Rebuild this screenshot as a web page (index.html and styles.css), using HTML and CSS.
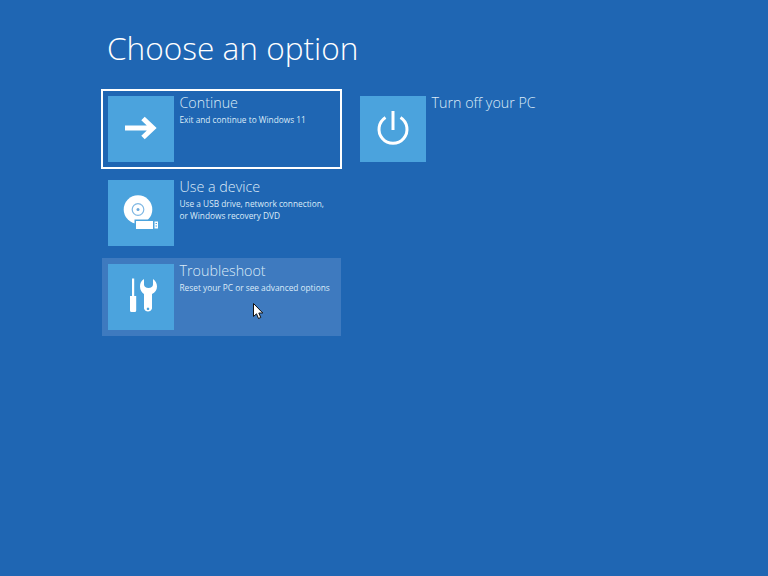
FILE: index.html
```html
<!DOCTYPE html>
<html lang="en">
<head>
  <meta charset="UTF-8">
  <meta name="viewport" content="width=device-width, initial-scale=1.0">
  <title>Choose an option</title>
  <link rel="stylesheet" href="styles.css">
</head>
<body>

<div class="screen">
  <h1>Choose an option</h1>

  <div class="options">
    <div class="column">
      <div class="option focused">
        <div class="tile">
          <svg viewBox="0 0 66 66" width="66" height="66">
            <path d="M17 32h28M35 22.500 45 32 35 41.500" fill="none" stroke="#fff" stroke-width="5"/>
          </svg>
        </div>
        <div class="text">
          <div class="name">Continue</div>
          <div class="desc">Exit and continue to Windows 11</div>
        </div>
      </div>

      <div class="option">
        <div class="tile">
          <svg viewBox="0 0 66 66" width="66" height="66">
            <circle cx="30" cy="29.500" r="14.300" fill="#fff"/>
            <circle cx="30" cy="29.500" r="5.800" fill="none" stroke="#7fb8e4" stroke-width="1.200"/>
            <circle cx="30" cy="29.500" r="1.500" fill="#6aa8da"/>
            <rect x="26.500" y="39.500" width="19.500" height="11" fill="#4ba3dd"/>
            <rect x="28" y="41" width="17" height="8" fill="#fff"/>
            <rect x="46.500" y="41.500" width="3.500" height="7" fill="#fff"/>
            <rect x="47.500" y="43" width="1.500" height="1" fill="#4ba3dd"/>
            <rect x="47.500" y="45.500" width="1.500" height="1" fill="#4ba3dd"/>
          </svg>
        </div>
        <div class="text">
          <div class="name">Use a device</div>
          <div class="desc">Use a USB drive, network connection,<br>or Windows recovery DVD</div>
        </div>
      </div>

      <div class="option hovered">
        <div class="tile">
          <svg viewBox="0 0 66 66" width="66" height="66">
            <path d="M24 14.500h2.200V32h2v14.500a1.500 1.500 0 0 1-1.500 1.500h-3.200a1.500 1.500 0 0 1-1.500-1.500V32h2z" fill="#fff"/>
            <path fill-rule="evenodd" fill="#fff" d="M36 15C33 16.500 32 19.500 32 22.500 32 26 33.800 28.800 36 30V44.500a4.200 4.200 0 0 0 8 0V30C47 28.800 49 26 49 22.500 49 19.500 47.500 16.500 45 15V20.500C45 22.500 43 24 40.500 24 38 24 36 22.500 36 20.500ZM40 43.500a1.300 1.300 0 1 0 .01 0Z"/>
          </svg>
        </div>
        <div class="text">
          <div class="name">Troubleshoot</div>
          <div class="desc">Reset your PC or see advanced options</div>
        </div>
        <svg class="cursor" viewBox="0 0 12 17" width="12" height="17">
          <path d="M.5.5V13.500L3.500 10.800 5.500 15.500 7.800 14.500 5.800 10H9.800Z" fill="#fff" stroke="#111" stroke-width="1"/>
        </svg>
      </div>
    </div>

    <div class="column">
      <div class="option">
        <div class="tile">
          <svg viewBox="0 0 66 66" width="66" height="66">
            <path d="M25.500 21.500A14 14 0 1 0 40.500 21.500" fill="none" stroke="#fff" stroke-width="3"/>
            <path d="M33 15V34" stroke="#fff" stroke-width="3"/>
          </svg>
        </div>
        <div class="text">
          <div class="name">Turn off your PC</div>
        </div>
      </div>
    </div>
  </div>
</div>

</body>
</html>
```

FILE: styles.css
```css
body {
  margin: 0;
  background-color: #1f66b3;
  color: white;
  font-family: "Open Sans", "Noto Sans", sans-serif;
}

.screen {
  height: 576px;
  padding-left: 101px;
  overflow: hidden;
}

h1 {
  margin: 0 0 0 6px;
  padding-top: 26px;
  height: 89px;
  box-sizing: border-box;
  font-size: 31.600px;
  font-weight: 300;
  line-height: 44px;
}

.options {
  display: flex;
  gap: 11px;
}

.column {
  display: flex;
  flex-direction: column;
  gap: 4px;
}

.option {
  position: relative;
  display: flex;
  gap: 5.500px;
  box-sizing: border-box;
  width: 241px;
  height: 80px;
  padding: 5px;
  border: 2px solid transparent;
}

.focused {
  border-color: white;
}

.hovered {
  padding: 6px;
  border-width: 1px;
  background-color: #3e7abf;
  background-clip: padding-box;
}

.tile {
  flex: none;
  width: 66px;
  height: 66px;
  background-color: #4ba3dd;
}

.tile svg {
  display: block;
}

.text {
  color: #dcebf8;
}

.name {
  margin-top: -3px;
  font-size: 14.300px;
  font-weight: 300;
  line-height: 20px;
}

.desc {
  margin-top: 1px;
  font-size: 8.300px;
  line-height: 12px;
}

.cursor {
  position: absolute;
  left: 151px;
  top: 45px;
}
```
